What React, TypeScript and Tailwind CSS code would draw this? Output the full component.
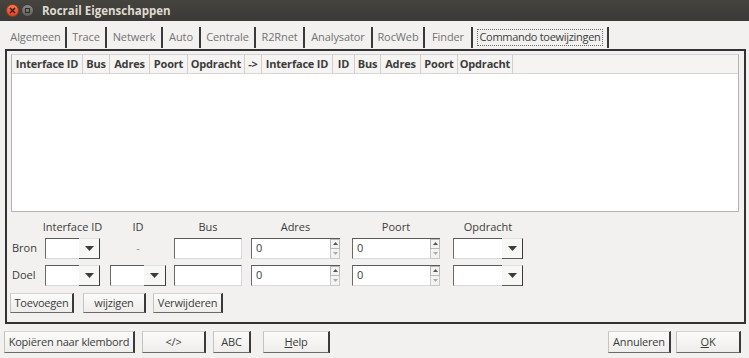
import React from 'react';

const font = { fontFamily: '"Open Sans", "Liberation Sans", sans-serif' };

function DownArrow() {
  return (
    <svg width="9" height="5" viewBox="0 0 9 5">
      <path d="M0 0 H9 L4.5 5 Z" fill="#3c3c3c" />
    </svg>
  );
}

function Button({ className, children }: { className: string; children: React.ReactNode }) {
  return (
    <div
      className={`flex items-center justify-center whitespace-nowrap tracking-[-0.2px] bg-gradient-to-b from-[#fbfbfa] to-[#eeedeb] border-t border-l border-t-[#d4d3d0] border-l-[#c4c3c0] border-r-2 border-b border-r-[#3a3a3a] border-b-[#6a6a6a] text-[11px] text-[#3c3c3c] ${className}`}
    >
      {children}
    </div>
  );
}

function Combo({ className, entry }: { className: string; entry: string }) {
  return (
    <div className={`flex h-[21px] ${className}`}>
      <div className={`h-full bg-white border-t border-l border-t-[#5a5a5a] border-l-[#6a6a6a] border-b border-b-[#d8d8d8] ${entry}`} />
      <div className="flex-1 h-full flex items-center justify-center bg-[#f7f7f6] border-r border-b border-r-[#3a3a3a] border-b-[#5a5a5a] border-t border-t-[#e0e0e0]">
        <DownArrow />
      </div>
    </div>
  );
}

function Spin({ className }: { className: string }) {
  return (
    <div className={`flex h-[21px] ${className}`}>
      <div className="flex-1 h-full bg-white border-t border-l border-t-[#5a5a5a] border-l-[#6a6a6a] border-b border-b-[#d8d8d8] flex items-center pl-[4px] text-[11px] text-[#3c3c3c]">
        0
      </div>
      <div className="w-[10px] h-full flex flex-col bg-white border-t border-t-[#5a5a5a]">
        <div className="flex-1 flex items-center justify-center bg-[#f3f3f2] border border-[#b8b8b8]">
          <svg width="5" height="3" viewBox="0 0 5 3">
            <path d="M0 3 H5 L2.5 0 Z" fill="#555" />
          </svg>
        </div>
        <div className="flex-1 flex items-center justify-center bg-[#f3f3f2] border border-t-0 border-[#c8c8c8]">
          <svg width="5" height="3" viewBox="0 0 5 3">
            <path d="M0 0 H5 L2.5 3 Z" fill="#aaa" />
          </svg>
        </div>
      </div>
    </div>
  );
}

function Field({ className }: { className: string }) {
  return (
    <div
      className={`h-[21px] bg-white border-t border-l border-t-[#5a5a5a] border-l-[#6a6a6a] border-b border-r border-b-[#d8d8d8] border-r-[#d8d8d8] ${className}`}
    />
  );
}

export default function App() {
  const tabs = [
    { label: 'Algemeen', w: 'w-[61px]' },
    { label: 'Trace', w: 'w-[40px]' },
    { label: 'Netwerk', w: 'w-[56px]' },
    { label: 'Auto', w: 'w-[38px]' },
    { label: 'Centrale', w: 'w-[55px]' },
    { label: 'R2Rnet', w: 'w-[49px]' },
    { label: 'Analysator', w: 'w-[68px]' },
    { label: 'RocWeb', w: 'w-[52px]' },
    { label: 'Finder', w: 'w-[48px]' },
  ];

  const headers = [
    { label: 'Interface ID', w: 'w-[71px]' },
    { label: 'Bus', w: 'w-[27px]' },
    { label: 'Adres', w: 'w-[40px]' },
    { label: 'Poort', w: 'w-[38px]' },
    { label: 'Opdracht', w: 'w-[57px]' },
    { label: '->', w: 'w-[17px]' },
    { label: 'Interface ID', w: 'w-[71px]' },
    { label: 'ID', w: 'w-[22px]' },
    { label: 'Bus', w: 'w-[26px]' },
    { label: 'Adres', w: 'w-[40px]' },
    { label: 'Poort', w: 'w-[37px]' },
    { label: 'Opdracht', w: 'w-[55px]' },
  ];

  return (
    <div className="w-[749px] h-[358px] bg-[#f2f1f0] flex flex-col overflow-hidden whitespace-nowrap" style={font}>
      {/* title bar */}
      <div className="h-[21px] bg-gradient-to-b from-[#45443f] to-[#3a3935] flex items-center">
        <div className="ml-[6px] w-[13px] h-[13px] rounded-full bg-gradient-to-b from-[#f47a52] to-[#d9431d] border border-[#9a3a1c] flex items-center justify-center">
          <svg width="7" height="7" viewBox="0 0 7 7">
            <path d="M1 1 L6 6 M6 1 L1 6" stroke="#3a1608" strokeWidth="1.4" />
          </svg>
        </div>
        <div className="ml-[2px] w-[13px] h-[13px] rounded-full bg-gradient-to-b from-[#8a8984] to-[#5f5e5a] border border-[#3a3935] flex items-center justify-center">
          <div className="w-[5px] h-[5px] border border-[#2e2d2a]" />
        </div>
        <span className="ml-[8px] text-[11.5px] font-bold text-[#dfdbd2]">Rocrail Eigenschappen</span>
      </div>

      {/* tabs */}
      <div className="mt-[6px] ml-[6px] h-[21px] flex items-stretch text-[11px] tracking-[-0.1px]">
        {tabs.map((t) => (
          <div key={t.label} className={`${t.w} flex items-center justify-center text-[#737373] border-r-2 border-r-[#3a3a3a]`}>
            {t.label}
          </div>
        ))}
        <div className="w-[136px] flex items-center justify-center border-r-2 border-r-[#3a3a3a]">
          <div className="border border-dotted border-[#6a6a6a] px-[1px] h-[17px] flex items-center text-[#3c3c3c] tracking-[-0.3px]">
            Commando toewijzingen
          </div>
        </div>
      </div>

      {/* notebook panel */}
      <div className="mt-[1px] ml-[5px] w-[741px] h-[275px] border-2 border-[#333] flex flex-col">
        {/* table */}
        <div className="mt-[3px] ml-[4px] w-[728px] h-[158px] border border-[#b4b4b4] border-t-[#d4d4d4] bg-white flex flex-col">
          <div className="h-[19px] flex bg-[#f5f4f2] border-b border-[#d6d5d2]">
            {headers.map((h, i) => (
              <div
                key={i}
                className={`${h.w} flex items-center justify-center text-[11px] font-bold text-[#3c3c3c] border-r border-[#d0cfcc] tracking-[-0.2px]`}
              >
                {h.label}
              </div>
            ))}
          </div>
        </div>

        {/* form labels */}
        <div className="mt-[8px] h-[14px] flex items-center text-[11px] text-[#3c3c3c]">
          <div className="ml-[38px] w-[55px] flex justify-center">Interface ID</div>
          <div className="ml-[10px] w-[56px] text-center">ID</div>
          <div className="ml-[8px] w-[68px] text-center">Bus</div>
          <div className="ml-[9px] w-[89px] text-center">Adres</div>
          <div className="ml-[12px] w-[88px] text-center">Poort</div>
          <div className="ml-[13px] w-[70px] text-center">Opdracht</div>
        </div>

        {/* Bron */}
        <div className="mt-[3px] h-[22px] flex items-center text-[11px] text-[#3c3c3c]">
          <div className="ml-[5px] w-[33px]">Bron</div>
          <Combo className="w-[55px]" entry="w-[34px]" />
          <div className="ml-[10px] w-[56px] text-center text-[#888]">-</div>
          <Field className="ml-[8px] w-[68px]" />
          <Spin className="ml-[9px] w-[89px]" />
          <Spin className="ml-[12px] w-[88px]" />
          <Combo className="ml-[13px] w-[70px]" entry="w-[49px]" />
        </div>

        {/* Doel */}
        <div className="mt-[5px] h-[22px] flex items-center text-[11px] text-[#3c3c3c]">
          <div className="ml-[5px] w-[33px]">Doel</div>
          <Combo className="w-[55px]" entry="w-[34px]" />
          <Combo className="ml-[10px] w-[56px]" entry="w-[34px]" />
          <Field className="ml-[8px] w-[68px]" />
          <Spin className="ml-[9px] w-[89px]" />
          <Spin className="ml-[12px] w-[88px]" />
          <Combo className="ml-[13px] w-[70px]" entry="w-[49px]" />
        </div>

        {/* actions */}
        <div className="mt-[7px] flex items-center">
          <Button className="ml-[3px] w-[64px] h-[20px]">Toevoegen</Button>
          <Button className="ml-[9px] w-[63px] h-[20px]">wijzigen</Button>
          <Button className="ml-[7px] w-[70px] h-[20px]">Verwijderen</Button>
        </div>
      </div>

      {/* dialog buttons */}
      <div className="mt-[7px] h-[22px] flex items-center">
        <Button className="ml-[4px] w-[131px] h-[22px]">Kopiëren naar klembord</Button>
        <Button className="ml-[7px] w-[64px] h-[22px]">&lt;/&gt;</Button>
        <Button className="ml-[7px] w-[38px] h-[22px]">ABC</Button>
        <Button className="ml-[12px] w-[67px] h-[22px]">
          <span className="underline">H</span>elp
        </Button>
        <div className="flex-1" />
        <Button className="w-[63px] h-[22px]">Annuleren</Button>
        <Button className="ml-[5px] mr-[8px] w-[65px] h-[22px]">
          <span className="underline">O</span>K
        </Button>
      </div>
    </div>
  );
}
